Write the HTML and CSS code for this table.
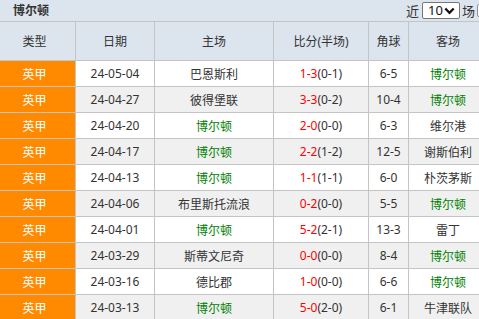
FILE: index.html
```html
<!DOCTYPE html>
<html lang="zh-CN">
<head>
<meta charset="utf-8">
<title>博尔顿 近期战绩</title>
<link rel="stylesheet" href="styles.css">
</head>
<body>
<div class="page">
  <div class="titlebar">
    <span class="team-title">博尔顿</span>
    <div class="filter">
      <span class="filter-label">近</span>
      <span class="select"><span class="select-value">10</span><svg class="chevron" width="11" height="8" viewBox="0 0 11 8"><path d="M1.3 1.5 L5.5 5.8 L9.7 1.5" fill="none" stroke="#111" stroke-width="2.3"/></svg></span>
      <span class="filter-label unit">场</span>
      <span class="check"></span>
    </div>
  </div>
  <table class="matches">
    <thead>
      <tr>
        <th class="c-type">类型</th>
        <th class="c-date">日期</th>
        <th class="c-home">主场</th>
        <th class="c-score">比分(半场)</th>
        <th class="c-corner">角球</th>
        <th class="c-away">客场</th>
      </tr>
    </thead>
    <tbody>
      <tr>
        <td class="league">英甲</td><td>24-05-04</td><td>巴恩斯利</td>
        <td><span class="ft">1-3</span>(0-1)</td><td>6-5</td><td class="self">博尔顿</td>
      </tr>
      <tr class="alt">
        <td class="league">英甲</td><td>24-04-27</td><td>彼得堡联</td>
        <td><span class="ft">3-3</span>(0-2)</td><td>10-4</td><td class="self">博尔顿</td>
      </tr>
      <tr>
        <td class="league">英甲</td><td>24-04-20</td><td class="self">博尔顿</td>
        <td><span class="ft">2-0</span>(0-0)</td><td>6-3</td><td>维尔港</td>
      </tr>
      <tr class="alt">
        <td class="league">英甲</td><td>24-04-17</td><td class="self">博尔顿</td>
        <td><span class="ft">2-2</span>(1-2)</td><td>12-5</td><td>谢斯伯利</td>
      </tr>
      <tr>
        <td class="league">英甲</td><td>24-04-13</td><td class="self">博尔顿</td>
        <td><span class="ft">1-1</span>(1-1)</td><td>6-0</td><td>朴茨茅斯</td>
      </tr>
      <tr class="alt">
        <td class="league">英甲</td><td>24-04-06</td><td>布里斯托流浪</td>
        <td><span class="ft">0-2</span>(0-0)</td><td>5-5</td><td class="self">博尔顿</td>
      </tr>
      <tr>
        <td class="league">英甲</td><td>24-04-01</td><td class="self">博尔顿</td>
        <td><span class="ft">5-2</span>(2-1)</td><td>13-3</td><td>雷丁</td>
      </tr>
      <tr class="alt">
        <td class="league">英甲</td><td>24-03-29</td><td>斯蒂文尼奇</td>
        <td><span class="ft">0-0</span>(0-0)</td><td>8-4</td><td class="self">博尔顿</td>
      </tr>
      <tr>
        <td class="league">英甲</td><td>24-03-16</td><td>德比郡</td>
        <td><span class="ft">1-0</span>(0-0)</td><td>6-6</td><td class="self">博尔顿</td>
      </tr>
      <tr class="alt">
        <td class="league">英甲</td><td>24-03-13</td><td class="self">博尔顿</td>
        <td><span class="ft">5-0</span>(2-0)</td><td>6-1</td><td>牛津联队</td>
      </tr>
    </tbody>
  </table>
</div>
</body>
</html>
```
FILE: styles.css
```css
html, body {
  margin: 0;
  padding: 0;
  overflow: hidden;
}

body {
  font-family: "Noto Sans", "Noto Sans CJK SC", sans-serif;
  font-size: 12px;
  color: #333;
  background: #fff;
}

.page {
  width: 500px;
}

.titlebar {
  display: flex;
  align-items: center;
  height: 21px;
  padding: 0 10px 0 13px;
  background: #dce4ee;
  border-bottom: 1px solid #c4c4c4;
}

.team-title {
  font-weight: bold;
  font-size: 12px;
  color: #333;
  line-height: 21px;
}

.filter {
  margin-left: auto;
  display: flex;
  align-items: center;
  font-size: 13px;
  color: #333;
}

.filter-label {
  line-height: 16px;
}

.select {
  display: flex;
  align-items: center;
  box-sizing: border-box;
  width: 38px;
  height: 17px;
  margin: 0 2px 0 3px;
  padding-left: 5px;
  background: #fff;
  border: 1px solid #767676;
  border-radius: 2px;
  color: #111;
}

.select-value {
  font-size: 13px;
  line-height: 15px;
}

.chevron {
  margin-left: 1px;
}

.check {
  box-sizing: border-box;
  width: 13px;
  height: 13px;
  margin-left: 2px;
  border: 1px solid #8f8f8f;
  border-radius: 2px;
  background: #fff;
}

.matches {
  width: 488px;
  table-layout: fixed;
  border-collapse: separate;
  border-spacing: 0;
}

.matches th,
.matches td {
  box-sizing: border-box;
  padding: 0;
  text-align: center;
  white-space: nowrap;
  border-right: 1px solid #c4c4c4;
  border-bottom: 1px solid #c4c4c4;
}

.matches th {
  height: 39px;
  font-weight: normal;
  color: #333;
  background: #dce4ee;
}

.matches td {
  height: 26px;
  background: #fff;
}

.matches tr.alt td {
  background: #f0f0f0;
}

.c-type { width: 76px; padding-right: 6px !important; }
.c-date { width: 79px; }
.c-home { width: 119px; }
.c-score { width: 95px; }
.c-corner { width: 40px; }
.c-away { width: 79px; }

.matches td.league,
.matches tr.alt td.league {
  padding-right: 6px;
  background: #ff8a00;
  color: #fff;
}

.self {
  color: #008000;
}

.ft {
  color: #ff0000;
}
```
